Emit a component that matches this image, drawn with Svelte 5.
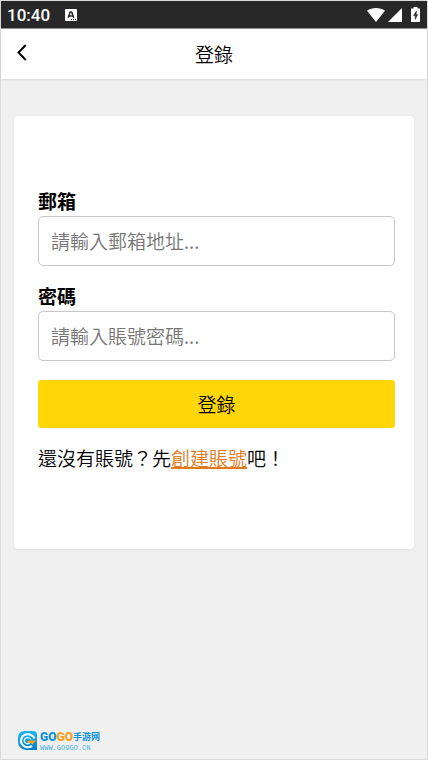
<script>
  let email = $state('');
  let password = $state('');
</script>

<div class="screen">
  <div class="status">
    <span class="time">10:40</span>
    <svg class="app" width="12" height="12" viewBox="0 0 12 12" aria-hidden="true">
      <rect width="12" height="12" rx="1" fill="#fff" />
      <path d="M3.200 8.700 5.200 3h1.500l2 5.700M4.200 6.900h3.500" fill="none" stroke="#282828" stroke-width="1.500" />
      <path d="M6 10.500h1M8 10.500h1M10 10.500h1" stroke="#282828" />
    </svg>
    <div class="signals">
      <svg width="18" height="14" viewBox="0 0 18 14" aria-hidden="true">
        <path d="M0 2.800C5 -.9 13 -.9 18 2.800L9 14Z" fill="#fff" />
      </svg>
      <svg width="14" height="14" viewBox="0 0 14 14" aria-hidden="true">
        <path d="M14 0V14H0Z" fill="#fff" />
      </svg>
      <svg class="battery" width="9" height="15" viewBox="0 0 9 15" aria-hidden="true">
        <path d="M2.500 0h4v1.500H9V15H0V1.500h2.500Z" fill="#fff" />
        <path d="M5.500 4 2.500 8.500h1.700v4L6.700 7.600H5.100Z" fill="#282828" stroke="#282828" stroke-width=".5" />
      </svg>
    </div>
  </div>

  <header>
    <button class="back" type="button" aria-label="返回">
      <svg width="10" height="17" viewBox="0 0 10 17" aria-hidden="true">
        <path d="M8.800 1 1.500 8.500l7.300 7.500" fill="none" stroke="#000" stroke-width="2" />
      </svg>
    </button>
    <h1>登錄</h1>
  </header>

  <main>
    <form onsubmit={(e) => e.preventDefault()}>
      <label for="email">郵箱</label>
      <input id="email" type="email" placeholder="請輸入郵箱地址..." bind:value={email} />
      <label for="password">密碼</label>
      <input id="password" type="password" placeholder="請輸入賬號密碼..." bind:value={password} />
      <button class="submit" type="submit">登錄</button>
      <p>還沒有賬號？先<a href="#register">創建賬號</a>吧！</p>
    </form>
  </main>

  <footer>
    <svg width="20" height="20" viewBox="0 0 20 20" aria-hidden="true">
      <defs>
        <linearGradient id="blue" x2="0" y2="1">
          <stop stop-color="#21b5ee" />
          <stop offset="1" stop-color="#087fc9" />
        </linearGradient>
      </defs>
      <path d="M7 0h8q4 0 4 4v15H8Q0 18 0 10V7q0-7 7-7Z" fill="url(#blue)" />
      <path d="M16.500 7.500A7 6.500 0 1 0 14 15" fill="none" stroke="#e9f9ff" stroke-width="2.200" />
      <path d="M13 8.500A3.500 3 0 1 0 12 12" fill="none" stroke="#d8f3fc" stroke-width="1.500" />
      <path d="M9.500 9.500H18l-3.500 4-1.500-1.500H9.500Z" fill="#f9a51a" />
    </svg>
    <div class="brand">
      <div class="name"><b>GO</b><b class="orange">GO</b><span>手游网</span></div>
      <div class="url">WWW.GO9GO.CN</div>
    </div>
  </footer>
</div>

<style>
  :global(body) {
    margin: 0;
    background: #f0f0f0;
  }
  .screen {
    box-sizing: border-box;
    min-height: 100vh;
    display: flex;
    flex-direction: column;
    border: 1px solid #dadada;
    background: #f0f0f0;
    color: #000;
    font: 350 19px/30px "Noto Sans CJK TC", sans-serif;
  }
  .status {
    display: flex;
    align-items: center;
    height: 27px;
    padding: 0 7px 0 6px;
    background: #282828;
    color: #fff;
    border-bottom: 1px solid #8c8c8c;
  }
  .time {
    font: 500 17px/28px Roboto, sans-serif;
  }
  .app {
    margin-left: 15px;
  }
  .signals {
    display: flex;
    align-items: center;
    gap: 3px;
    margin-left: auto;
  }
  .battery {
    margin-left: 6px;
  }
  header {
    display: grid;
    grid-template-columns: 40px 1fr 40px;
    align-items: center;
    height: 50px;
    background: #fefefe;
    box-shadow: 0 1px 2px #00000018;
  }
  .back {
    display: flex;
    align-items: center;
    height: 46px;
    padding: 0 14px 0 16px;
    border: 0;
    background: none;
    align-self: start;
  }
  h1 {
    margin: 0;
    font-size: 19px;
    font-weight: inherit;
    text-align: center;
  }
  main {
    padding: 37px 13px;
  }
  form {
    display: flex;
    flex-direction: column;
    padding: 70px 19px 76px 24px;
    border-radius: 4px;
    background: #fff;
    box-shadow: 0 1px 3px #00000010;
  }
  label {
    font-weight: 700;
  }
  input {
    box-sizing: border-box;
    width: 100%;
    height: 50px;
    margin: 0 0 15px;
    padding: 0 12px 2px;
    border: 1px solid #c8c8c8;
    border-radius: 5px;
    background: #fff;
    color: #000;
    font: inherit;
  }
  input::placeholder {
    color: #757575;
    opacity: 1;
  }
  .submit {
    height: 48px;
    margin: 4px 0 15px;
    padding: 0;
    border: 0;
    border-radius: 3px;
    background: #ffd608;
    color: #000;
    font: inherit;
  }
  p {
    margin: 0;
  }
  a {
    color: #e07a1c;
    text-decoration: underline 2px;
  }
  footer {
    display: flex;
    align-items: center;
    gap: 2px;
    margin-top: auto;
    padding: 0 17px 7px;
  }
  .name {
    display: flex;
    align-items: center;
    height: 14px;
    color: #0d94d8;
  }
  .name b {
    font: 900 12px/14px Roboto, sans-serif;
  }
  .name .orange {
    color: #f9a01b;
  }
  .name span {
    font: 700 9px/14px "Noto Sans CJK SC", sans-serif;
  }
  .url {
    color: #3fb0e2;
    font: 7px/8px "Liberation Mono", monospace;
  }
</style>
